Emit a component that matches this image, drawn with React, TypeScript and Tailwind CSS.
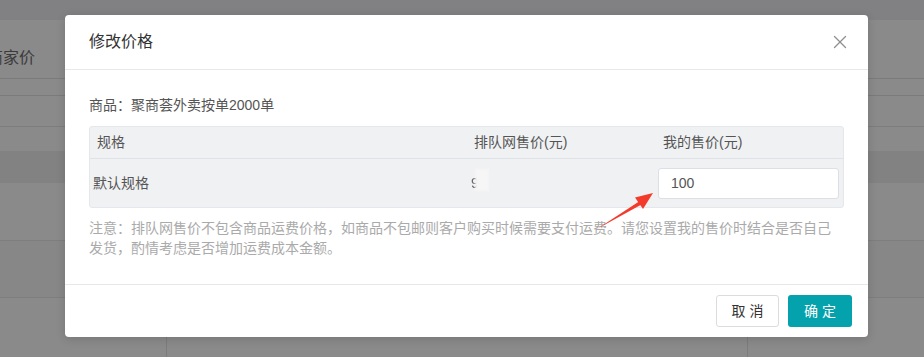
import { X } from "lucide-react"

const font = "font-['Liberation_Sans','Noto_Sans_CJK_SC',sans-serif]"

function Backdrop() {
  return (
    <div className="flex flex-col h-full bg-[#8a8a8a]">
      <div className="h-[20px] bg-[#818183]" />
      <div className="h-[58px] pt-[28px] text-[16px] leading-[20px] text-[#3b3b3c] -ml-[13px]">
        商家价
      </div>
      <div className="h-[17px] border-t border-[#7b7b7c]" />
      <div className="h-[31px] border-t border-[#7b7b7c]" />
      <div className="h-[25px] border-t border-[#7d7d7e]" />
      <div className="h-[32px] bg-[#828283]" />
      <div className="h-[57px]" />
      <div className="h-[57px] border-t border-[#7d7e7e] bg-[#868786]" />
      <div className="flex flex-1 border-t border-[#7d7e7e]">
        <div className="w-[167px] border-r border-[#7c7c7c]" />
        <div className="w-[581px] border-r border-[#7c7c7c]" />
      </div>
    </div>
  )
}

function Arrow() {
  return (
    <svg
      className="absolute left-0 top-0 pointer-events-none"
      width="924"
      height="357"
      viewBox="0 0 924 357"
    >
      <path d="M597 229 L639 201.5 L641.5 204.5 Z" fill="#f23b2b" />
      <path d="M653 193 L635 197.5 L643 209 Z" fill="#f23b2b" />
    </svg>
  )
}

function PriceDialog() {
  return (
    <div className="absolute left-[65px] top-[15px] w-[803px] h-[322px] bg-white rounded-[4px] shadow-[0_2px_10px_rgba(0,0,0,0.15)] flex flex-col">
      <div className="h-[55px] flex items-center justify-between pl-[24px] pr-[17px] border-b border-[#e8e8e8]">
        <span className="text-[16px] text-[#333]">修改价格</span>
        <X className="w-[22px] h-[22px] text-[#8f8f8f]" strokeWidth={1.4} />
      </div>

      <div className="flex-1 px-[24px] pt-[25px]">
        <div className="text-[14px] leading-[20px] text-[#555]">商品：聚商荟外卖按单2000单</div>

        <div className="mt-[11px] bg-[#f0f1f3] border border-[#e4e7ec] rounded-[3px] text-[14px] text-[#555]">
          <div className="flex h-[32px] items-center border-b border-[#dfe2e7]">
            <div className="w-[376px] pl-[7px]">规格</div>
            <div className="w-[189px] pl-[8px]">排队网售价(元)</div>
            <div className="flex-1 pl-[8px]">我的售价(元)</div>
          </div>
          <div className="flex h-[48px] items-center">
            <div className="w-[376px] pl-[3px]">默认规格</div>
            <div className="w-[189px] pl-[5px] relative">
              <span className="blur-[0.7px] text-[#666]">9.</span>
              <span className="absolute left-[9px] top-[-4px] w-[14px] h-[22px] bg-[#f6f6f7] blur-[1px]" />
            </div>
            <div className="flex-1 pl-[3px] pr-[4px]">
              <div className="h-[31px] bg-white border border-[#dcdfe6] rounded-[3px] flex items-center pl-[12px] text-[#555]">
                100
              </div>
            </div>
          </div>
        </div>

        <div className="mt-[10px] text-[14px] leading-[20px] text-[#aaa] whitespace-nowrap">
          <div>注意：排队网售价不包含商品运费价格，如商品不包邮则客户购买时候需要支付运费。请您设置我的售价时结合是否自己</div>
          <div>发货，酌情考虑是否增加运费成本金额。</div>
        </div>
      </div>

      <div className="h-[53px] border-t border-[#e8e8e8] flex items-start justify-end gap-[9px] pt-[10px] pr-[16px]">
        <button className="w-[63px] h-[32px] border border-[#dcdcdc] rounded-[3px] bg-white text-[14px] text-[#333] tracking-[4px] pl-[4px]">
          取消
        </button>
        <button className="w-[64px] h-[32px] rounded-[3px] bg-[#04a2ac] text-[14px] text-white tracking-[4px] pl-[4px]">
          确定
        </button>
      </div>
    </div>
  )
}

export default function App() {
  return (
    <div className={`relative w-[924px] h-[357px] overflow-hidden ${font}`}>
      <Backdrop />
      <PriceDialog />
      <Arrow />
    </div>
  )
}
